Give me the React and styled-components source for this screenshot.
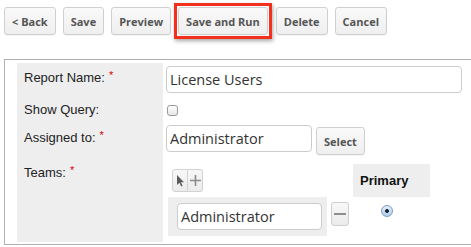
import React from 'react';
import styled, { createGlobalStyle } from 'styled-components';

const GlobalStyle = createGlobalStyle`
  html, body {
    margin: 0;
    padding: 0;
    background: #fff;
    overflow: hidden;
  }
  body {
    font-family: "Liberation Sans", Arial, sans-serif;
  }
`;

const Page = styled.div`
  width: 471px;
  height: 247px;
  overflow: hidden;
`;

const Toolbar = styled.div`
  display: flex;
  align-items: center;
  gap: 7px;
  padding: 7px 0 0 4px;
  height: 28px;
`;

const Button = styled.button`
  height: 28px;
  padding: 0 7px;
  border: 1px solid #cfcfcf;
  border-radius: 3px;
  background: linear-gradient(#f9f9f9, #efefef);
  color: #555;
  font-family: "Open Sans", "Liberation Sans", sans-serif;
  font-weight: 700;
  font-size: 11px;
  white-space: nowrap;
  box-shadow: 0 1px 0 rgba(0, 0, 0, 0.04);
  cursor: pointer;
`;

// red annotation frame drawn over the toolbar
const Highlight = styled.span`
  display: inline-flex;
  margin: -4px -3px -4px -4px;
  padding: 1px;
  border: 3px solid #f2301d;
  box-shadow: 1px 2px 4px rgba(0, 0, 0, 0.35);
`;

const Panel = styled.div`
  margin: 24px 0 0 4px;
  width: 500px;
  border: 1px solid #b0b0b0;
  padding: 3px 0 2px 12px;
`;

const Form = styled.div`
  display: grid;
  grid-template-columns: 146px 1fr;
  column-gap: 3px;
`;

const Label = styled.div`
  height: ${p => p.$h}px;
  box-sizing: border-box;
  padding: ${p => p.$pt}px 0 0 7px;
  background: #eeeeee;
  font-size: 13px;
  line-height: 16px;
  color: #222;
`;

const Req = styled.span`
  color: #d40000;
  font-size: 11px;
  vertical-align: 3px;
  margin-left: 4px;
`;

const Field = styled.div`
  height: ${p => p.$h}px;
  box-sizing: border-box;
  padding-top: ${p => p.$pt}px;
  display: flex;
  align-items: flex-start;
`;

const TextInput = styled.input`
  box-sizing: border-box;
  width: ${p => p.$w}px;
  height: 27px;
  margin: 0;
  padding: 0 3px;
  border: 1px solid #cccccc;
  border-radius: 4px;
  font-family: "Open Sans", "Liberation Sans", sans-serif;
  font-size: 14.5px;
  color: #333;
  background: #fff;
  outline: none;
`;

const Checkbox = styled.input.attrs({ type: 'checkbox' })`
  appearance: none;
  margin: 0 0 0 1px;
  width: 11px;
  height: 11px;
  border: 1px solid #9a9a9a;
  border-radius: 3px;
  background: linear-gradient(#ffffff, #e6e6e6);
`;

const SelectButton = styled(Button)`
  margin: 2px 0 0 4px;
`;

const TeamsTable = styled.div`
  margin-left: 2px;
  display: grid;
  grid-template-columns: 159px 26px 77px;
  grid-template-rows: 33px 39px;
`;

const ToolCell = styled.div`
  display: flex;
  align-items: center;
  padding-left: 4px;
`;

const IconGroup = styled.div`
  display: flex;
  height: 23px;
`;

const IconButton = styled.span`
  box-sizing: border-box;
  width: ${p => p.$w}px;
  height: 100%;
  display: flex;
  align-items: center;
  justify-content: center;
  border: 1px solid #d2d2d2;
  background: linear-gradient(#f7f7f7, #ececec);
  border-radius: ${p => (p.$first ? '3px 0 0 3px' : '0 3px 3px 0')};
  & + & {
    border-left: none;
  }
`;

const PrimaryHead = styled.div`
  background: #eeeeee;
  display: flex;
  align-items: center;
  padding-left: 7px;
  font-weight: 700;
  font-size: 13px;
  color: #111;
`;

const TeamCell = styled.div`
  background: #eeeeee;
  padding: 6px 0 0 9px;
`;

const MinusButton = styled.span`
  box-sizing: border-box;
  margin: 5px 0 0 4px;
  width: 18px;
  height: 24px;
  display: flex;
  align-items: center;
  justify-content: center;
  border: 1px solid #cfcfcf;
  border-radius: 3px;
  background: linear-gradient(#f8f8f8, #ebebeb);
`;

const RadioCell = styled.div`
  padding: 8px 0 0 28px;
`;

const Radio = styled.span`
  display: block;
  box-sizing: border-box;
  width: 12px;
  height: 12px;
  border-radius: 50%;
  border: 1px solid #7d9cc4;
  background: radial-gradient(circle, #1e2a3a 0 1.6px, transparent 2.2px),
    linear-gradient(#e4eefa, #b3cdec);
`;

const Empty = styled.div``;

const PointerIcon = () => (
  <svg width="9" height="13" viewBox="0 0 9 13">
    <path d="M1 1 L1 11 L3.4 8.8 L5.2 12.4 L6.6 11.7 L4.9 8.2 L8 8.2 Z" fill="#5a5a5a" />
  </svg>
);

const PlusIcon = () => (
  <svg width="13" height="13" viewBox="0 0 13 13">
    <path d="M6.5 1 V12 M1 6.5 H12" stroke="#8a8a8a" strokeWidth="1.6" />
  </svg>
);

const MinusIcon = () => (
  <svg width="12" height="4" viewBox="0 0 12 4">
    <path d="M0 2 H12" stroke="#8f8f8f" strokeWidth="2" />
  </svg>
);

export default function App() {
  return (
    <Page>
      <GlobalStyle />
      <Toolbar>
        <Button>&lt; Back</Button>
        <Button>Save</Button>
        <Button>Preview</Button>
        <Highlight>
          <Button>Save and Run</Button>
        </Highlight>
        <Button>Delete</Button>
        <Button>Cancel</Button>
      </Toolbar>

      <Panel>
        <Form>
          <Label $h={37} $pt={4}>
            Report Name:<Req>*</Req>
          </Label>
          <Field $h={37} $pt={3}>
            <TextInput $w={296} defaultValue="License Users" />
          </Field>

          <Label $h={21} $pt={2}>Show Query:</Label>
          <Field $h={21} $pt={5}>
            <Checkbox />
          </Field>

          <Label $h={37} $pt={6}>
            Assigned to:<Req>*</Req>
          </Label>
          <Field $h={37} $pt={4}>
            <TextInput $w={146} defaultValue="Administrator" />
            <SelectButton>Select</SelectButton>
          </Field>

          <Label $h={84} $pt={4}>
            Teams:<Req>*</Req>
          </Label>
          <Field $h={84} $pt={6}>
            <TeamsTable>
              <ToolCell>
                <IconGroup>
                  <IconButton $w={16} $first>
                    <PointerIcon />
                  </IconButton>
                  <IconButton $w={15}>
                    <PlusIcon />
                  </IconButton>
                </IconGroup>
              </ToolCell>
              <Empty />
              <PrimaryHead>Primary</PrimaryHead>

              <TeamCell>
                <TextInput $w={145} defaultValue="Administrator" />
              </TeamCell>
              <div>
                <MinusButton>
                  <MinusIcon />
                </MinusButton>
              </div>
              <RadioCell>
                <Radio />
              </RadioCell>
            </TeamsTable>
          </Field>
        </Form>
      </Panel>
    </Page>
  );
}
